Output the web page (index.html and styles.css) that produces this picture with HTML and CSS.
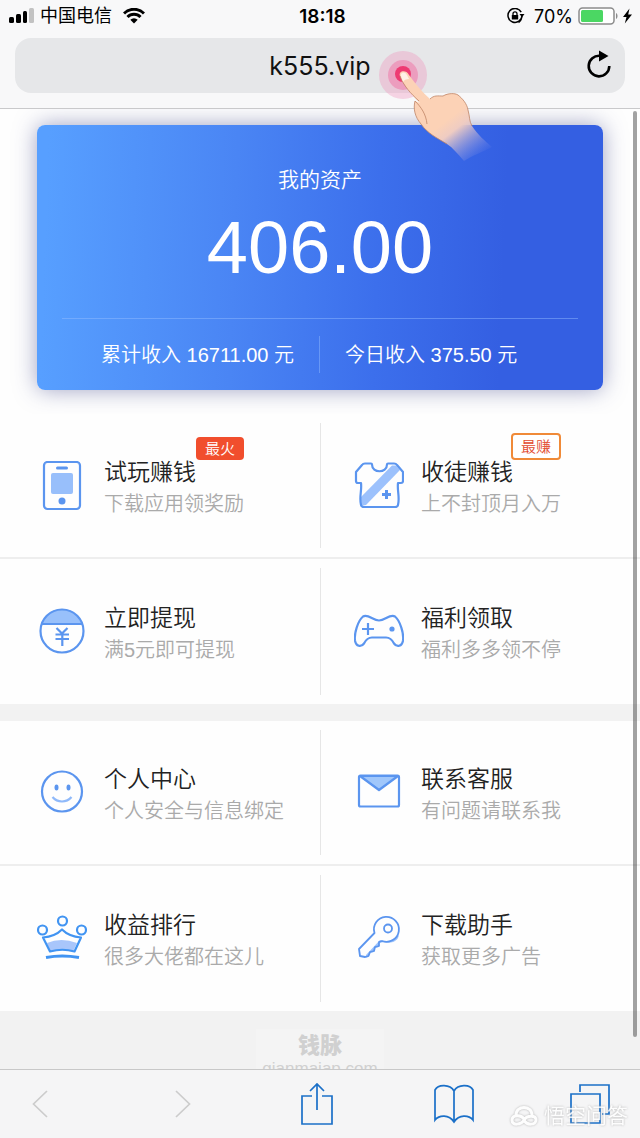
FILE: index.html
```html
<!DOCTYPE html>
<html lang="zh-CN">
<head>
<meta charset="utf-8">
<meta name="viewport" content="width=device-width, initial-scale=1">
<title>k555.vip</title>
<link rel="stylesheet" href="styles.css">
</head>
<body>
<header class="browser-head">
  <div class="status">
    <div class="status-side">
      <svg width="26" height="16" viewBox="0 0 26 16" aria-hidden="true"><rect x="0" y="9" width="5" height="6" rx="1.500"/><rect x="7" y="6" width="5" height="9" rx="1.500"/><rect x="14" y="3" width="4" height="12" rx="1.500"/><rect x="20" y="0" width="5" height="15" rx="1.500" fill="#c2c2c2"/></svg>
      <span class="carrier">中国电信</span>
      <svg class="wifi" width="22" height="16" viewBox="0 0 22 16" fill="none" stroke="#000" stroke-width="3" aria-hidden="true"><path d="M1 5.500a14 14 0 0 1 20 0M4.500 9a9 9 0 0 1 13 0"/><path d="M11 15.500 7.300 11.800a5.200 5.200 0 0 1 7.400 0z" fill="#000" stroke="none"/></svg>
    </div>
    <span class="clock">18:18</span>
    <div class="status-side status-right">
      <svg width="18" height="16" viewBox="0 0 18 16" aria-hidden="true"><path d="M14.200 4.200a7 7 0 1 0 .8 3.300M11.500 14.500a7 7 0 0 0 3-4" fill="none" stroke="#000" stroke-width="1.500"/><path d="M12.500 6h5L15 9.300z"/><rect x="4.800" y="7" width="6.400" height="4.600" rx=".6"/><path d="M6 7.500V5.800a2 2 0 0 1 4 0v1.700" fill="none" stroke="#000" stroke-width="1.300"/></svg>
      <span class="percent">70%</span>
      <svg width="54" height="18" viewBox="0 0 54 18" aria-hidden="true"><rect x="1" y="1" width="35" height="16" rx="3.500" fill="#fff" stroke="#8c8c8c" stroke-width="1.500"/><rect x="3" y="3" width="22" height="12" rx="1.500" fill="#4bd763"/><path d="M38 6c2 .8 2 5.200 0 6z" fill="#8c8c8c"/><path d="M51.500 1.500 45 10h3.500L46.800 16.500 54 7.500h-3.800z"/></svg>
    </div>
  </div>
  <div class="address">
    <input class="address-input" type="text" value="k555.vip" aria-label="网址">
    <button class="reload" type="button" aria-label="刷新">
      <svg width="26" height="30" viewBox="0 0 26 30" aria-hidden="true"><path d="M14 5.800A10.300 10.300 0 1 0 23.300 16" fill="none" stroke="#000" stroke-width="2.600"/><path d="M13 .5 22.500 6 13 11.500z"/></svg>
    </button>
    <svg class="tap-hand" width="120" height="116" viewBox="376 48 120 116" aria-hidden="true">
      <defs>
        <linearGradient id="skin" gradientUnits="userSpaceOnUse" x1="450" y1="118" x2="480" y2="157">
          <stop offset="0" stop-color="#fcd2b6"/><stop offset=".25" stop-color="#efccc2"/><stop offset="1" stop-color="#8c96e8" stop-opacity="0.050"/>
        </linearGradient>
      </defs>
      <circle cx="403" cy="75" r="24" fill="#ef86b4" opacity=".32"/>
      <circle cx="403" cy="75" r="15" fill="#ef5d98" opacity=".4"/>
      <circle cx="403" cy="74" r="8" fill="#ee3a72"/>
      <path d="M400 76C398 71 406 69 409 75 415 83 422 92 430 99 434 95 438 96 443 96 448 93 455 93 458 95 463 99 467 104 468 110 470 117 469 121 472 126 478 135 485 141 492 147 483 152 473 155 464 161 458 154 453 148 447 144 437 138 427 133 421 124 415 117 413 109 415 101L420 103C412 95 404 86 400 76z" fill="url(#skin)"/>
      <path d="M400 76C403 85 411 94 419 101M415 101C413 109 415 117 421 124 427 133 437 138 447 144M415 101C421 107 426 114 427 124M430 99C434 95 438 96 443 96 448 93 455 93 458 95 463 99 467 104 468 110 470 117 469 121 472 126" fill="none" stroke="#bf8466" stroke-width=".8"/>
      <path d="M401 76c-1-4 4-5 6-1l2 4c-3 0-5 1-6 3z" fill="#fff0e7"/>
    </svg>
  </div>
</header>

<div class="viewport">
  <main class="page">
    <section class="asset-wrap">
      <div class="asset">
        <h1 class="asset-title">我的资产</h1>
        <p class="asset-amount">406.00</p>
        <div class="asset-stats">
          <p class="stat stat-total">累计收入 16711.00 元</p>
          <p class="stat">今日收入 375.50 元</p>
        </div>
      </div>
    </section>

    <nav class="tiles" aria-label="赚钱与提现">
      <a class="tile" href="#play">
        <svg class="tile-icon" viewBox="0 0 50 50" aria-hidden="true"><rect x="7" y="1" width="36" height="47" rx="3.500"/><path d="M20.500 7h9" stroke-width="3" stroke-linecap="round"/><rect x="14" y="12" width="22" height="21" rx="2" fill="#98bffb" stroke="none"/><circle cx="25" cy="40" r="3.500" fill="#5b95ef" stroke="none"/></svg>
        <span class="tile-text"><span class="tile-title">试玩赚钱<span class="badge badge-hot">最火</span></span><span class="tile-sub">下载应用领奖励</span></span>
      </a>
      <a class="tile" href="#invite">
        <svg class="tile-icon" viewBox="0 0 50 50" aria-hidden="true"><path d="M38 4.500h4L46 9 12 44l-5 1-1-8z" fill="#9cc1fc" stroke="none"/><path d="M11 2.500h6q1 0 1 1c0 9 15 9 15 0q0-1 1-1h6q2 0 3 1.500l6 7V20q0 2-2 2h-3c-1 8 2 14 0 22q-.5 2-3 2H10q-2.500 0-3-2c-2-8 1-14 0-22H4q-2 0-2-2v-9L8 4q1-1.500 3-1.500z"/><path d="M32.500 29v9M28 33.500h9" stroke-width="3"/></svg>
        <span class="tile-text"><span class="tile-title">收徒赚钱<span class="badge badge-earn">最赚</span></span><span class="tile-sub">上不封顶月入万</span></span>
      </a>
      <a class="tile" href="#withdraw">
        <svg class="tile-icon" viewBox="0 0 50 50" aria-hidden="true"><path d="M4.500 17A21.500 21.500 0 0 1 45.500 17z" fill="#98c0fb" stroke="none"/><circle cx="25" cy="24" r="21.500"/><path d="M5 17h40M19.500 21l5.500 5.500 5.500-5.500M18.500 27.500h13.500M18.500 32h13.500M25.300 26.500V39"/></svg>
        <span class="tile-text"><span class="tile-title">立即提现</span><span class="tile-sub">满5元即可提现</span></span>
      </a>
      <a class="tile" href="#welfare">
        <svg class="tile-icon" viewBox="0 0 50 50" aria-hidden="true"><path d="M9 9.500c5-3 10 4 16 4s11-7 16-4c5 4 9 17 8 24-1 6-6 7-9 3-2-4-4-6-8-6H18c-4 0-6 2-8 6-3 4-8 3-9-3-1-7 3-20 8-24z"/><path d="M14 16v12M8 22h12"/><circle cx="38" cy="22" r="2.600" fill="#5c96ef" stroke="none"/></svg>
        <span class="tile-text"><span class="tile-title">福利领取</span><span class="tile-sub">福利多多领不停</span></span>
      </a>
    </nav>

    <nav class="tiles tiles-next" aria-label="账户与服务">
      <a class="tile" href="#profile">
        <svg class="tile-icon" viewBox="0 0 50 50" aria-hidden="true"><circle cx="25" cy="23.500" r="20"/><ellipse cx="19.500" cy="19.500" rx="2" ry="3" fill="#5c96ef" stroke="none"/><ellipse cx="31.500" cy="19.500" rx="2" ry="3" fill="#5c96ef" stroke="none"/><path d="M15.500 29c5 6 14 6 19 0" stroke="#8fb9fa"/></svg>
        <span class="tile-text"><span class="tile-title">个人中心</span><span class="tile-sub">个人安全与信息绑定</span></span>
      </a>
      <a class="tile" href="#service">
        <svg class="tile-icon" viewBox="0 0 50 50" aria-hidden="true"><path d="m6 8 19 14L44 8z" fill="#a0c7fb"/><rect x="5" y="7.500" width="40" height="31" rx="1.500"/></svg>
        <span class="tile-text"><span class="tile-title">联系客服</span><span class="tile-sub">有问题请联系我</span></span>
      </a>
      <a class="tile" href="#ranking">
        <svg class="tile-icon crown" viewBox="0 2 50 50" aria-hidden="true"><path d="M10 31q14-6 30 0l-4 8.500q-12-3-23 0z" fill="#a9c6fb" stroke="none"/><path d="M6 25.500q12-1 19-8 7 7 19 8l-6.500 14q-12-3.500-24.500 0z"/><circle cx="25.500" cy="9" r="4.500"/><circle cx="5.500" cy="18" r="4.500"/><circle cx="44.500" cy="18" r="4.500"/><path d="M9 45.500q16-3 33 0" stroke-width="3"/></svg>
        <span class="tile-text"><span class="tile-title">收益排行</span><span class="tile-sub">很多大佬都在这儿</span></span>
      </a>
      <a class="tile" href="#helper">
        <svg class="tile-icon" viewBox="0 2 50 50" aria-hidden="true"><path d="M12 43 26 28q9 4 19-5c-1 7-9 9-15 7l-5 1v4l-4 1-1 4-4 1-1.500 4-3.500 1z" fill="#9cc3fc" stroke="none"/><path d="M20.500 21A12.500 12.500 0 1 1 28 29l-3 1v4l-4 1-1 4-4 1-1.500 4-3.500 1-5-1-1-7z" stroke-width="1.800"/><circle cx="34" cy="16.500" r="4" stroke-width="1.800"/></svg>
        <span class="tile-text"><span class="tile-title">下载助手</span><span class="tile-sub">获取更多广告</span></span>
      </a>
    </nav>

    <footer class="brand">
      <div class="brand-box"><strong class="brand-name">钱脉</strong><span class="brand-url">qianmaiap.com</span></div>
    </footer>
  </main>
  <div class="scroll-thumb"></div>
</div>

<div class="toolbar">
  <button class="tool tool-off tool-back" type="button" aria-label="后退"><svg width="16" height="28" viewBox="0 0 16 28"><path d="M15 1 1.500 14 15 27"/></svg></button>
  <button class="tool tool-off" type="button" aria-label="前进"><svg width="16" height="28" viewBox="0 0 16 28"><path d="m1 1 13.500 13L1 27"/></svg></button>
  <button class="tool" type="button" aria-label="分享"><svg width="32" height="44" viewBox="0 0 32 44"><path d="M11 14H1v28h30V14H21M16 28V2M9 9l7-7 7 7"/></svg></button>
  <button class="tool" type="button" aria-label="书签"><svg width="40" height="40" viewBox="0 0 40 40"><path d="M20 38V7c-4-7-16-7-19-1v30c4-5 14-6 19 2 5-8 15-7 19-2V6c-3-6-15-6-19 1"/></svg></button>
  <button class="tool" type="button" aria-label="标签页"><svg width="40" height="40" viewBox="0 0 40 40"><path d="M1 10h29v29H1zM10 8V1h29v29h-7"/></svg></button>
  <div class="watermark">
    <svg width="28" height="20" viewBox="0 0 28 20" fill="none" stroke="#fff" stroke-width="3" aria-hidden="true"><path d="M6 9C6-1 22-1 22 9M14 13c-3-5-12-4-12 1 0 6 9 5 12 0 3-5 12-5 12 0s-9 6-12 0z"/></svg>
    <span>悟空问答</span>
  </div>
</div>
</body>
</html>
```
FILE: styles.css
```css
* {
  box-sizing: border-box;
}

body {
  margin: 0;
  height: 100vh;
  display: flex;
  flex-direction: column;
  background: #f2f2f2;
  color: #222;
  font-family: "Liberation Sans", "Noto Sans CJK SC", sans-serif;
}

h1, p {
  margin: 0;
}

button {
  padding: 0;
  border: 0;
  background: none;
}

svg {
  display: block;
  flex: none;
}

/* Browser header */
.browser-head {
  position: relative;
  z-index: 2;
  padding-bottom: 15px;
  background: #f8f8f9;
  border-bottom: 1px solid #c9c9cb;
}

.status {
  display: grid;
  grid-template-columns: 1fr auto 1fr;
  align-items: center;
  height: 32px;
  margin-bottom: 6px;
  padding: 0 8px 0 9px;
  color: #000;
  font-family: Inter, "Noto Sans CJK SC", sans-serif;
}

.status-side {
  display: flex;
  align-items: center;
  gap: 5px;
}

.status-right {
  justify-content: flex-end;
}

.carrier {
  font-size: 18px;
  line-height: 24px;
}

.wifi {
  margin-left: 6px;
}

.clock {
  padding-left: 4px;
  font-size: 19px;
  font-weight: 600;
}

.percent {
  margin-left: 4px;
  font-size: 18px;
}

.address {
  position: relative;
  display: flex;
  align-items: center;
  height: 55px;
  margin: 0 15px;
  border-radius: 16px;
  background: #e6e7e9;
}

.address-input {
  flex: 1;
  min-width: 0;
  height: 55px;
  padding: 0 48px;
  border: 0;
  outline: 0;
  background: none;
  color: #111;
  font: 25px Inter, sans-serif;
  text-align: center;
}

.reload {
  position: absolute;
  right: 13px;
  top: 12px;
}

.tap-hand {
  position: absolute;
  left: calc(50% + 56px);
  top: 10px;
  pointer-events: none;
}

/* Page area */
.viewport {
  position: relative;
  flex: 1;
  min-height: 0;
}

.page {
  height: 100%;
  overflow: hidden auto;
  scrollbar-width: none;
}

.scroll-thumb {
  position: absolute;
  top: 2px;
  right: 3px;
  bottom: 32px;
  width: 4px;
  border-radius: 2px;
  background: rgba(0, 0, 0, 0.36);
}

.asset-wrap {
  padding: 16px 37px 24px;
  background: #fefefe;
}

.asset {
  padding: 38px 25px 0;
  border-radius: 8px;
  background: linear-gradient(92deg, #579fff 2%, #4a85f4 35%, #3c6fec 60%, #345fe2 82%);
  box-shadow: 0 0 22px rgba(66, 72, 140, 0.5);
  color: #fff;
  text-align: center;
}

.asset-title {
  font-size: 21px;
  font-weight: 350;
  line-height: 33px;
}

.asset-amount {
  padding: 10px 0 28px;
  font-size: 74px;
  line-height: 84px;
}

.asset-stats {
  display: grid;
  grid-template-columns: 1fr 1fr;
  padding: 17px 0;
  border-top: 1px solid rgba(150, 190, 255, 0.45);
  font-size: 20px;
  font-weight: 350;
}

.stat {
  padding: 2px 25px 0;
  line-height: 35px;
  text-align: left;
}

.stat-total {
  border-right: 1px solid rgba(150, 190, 255, 0.45);
  text-align: right;
}

/* Menu tiles */
.tiles {
  display: grid;
  grid-template-columns: 1fr 1fr;
  grid-auto-rows: 145px;
  background: #fefefe;
}

.tiles-next {
  margin-top: 17px;
}

.tile {
  position: relative;
  display: flex;
  align-items: center;
  gap: 17px;
  padding-left: 37px;
  color: #222;
  text-decoration: none;
}

.tile:nth-child(-n+2) {
  border-bottom: 2px solid #eee;
}

.tile:nth-child(even) {
  padding-left: 34px;
}

.tile:nth-child(even)::before {
  content: "";
  position: absolute;
  left: 0;
  top: 9px;
  bottom: 9px;
  width: 1px;
  background: #e6e6e6;
}

.tile-icon {
  width: 50px;
  height: 50px;
  fill: none;
  stroke: #5b95ef;
  stroke-width: 2.2;
  stroke-linejoin: round;
}

.crown {
  stroke: #4194f2;
}

.tile-text {
  display: flex;
  flex-direction: column;
  align-items: flex-start;
  padding-top: 5px;
}

.tile-title {
  position: relative;
  font-size: 23px;
  font-weight: 350;
  line-height: 32px;
}

.tile-sub {
  color: #aaa;
  font-size: 20px;
  font-weight: 350;
  line-height: 32px;
}

.badge {
  position: absolute;
  bottom: 28px;
  border-radius: 4px;
  white-space: nowrap;
  font-size: 15px;
  line-height: 23px;
}

.badge-hot {
  left: 100%;
  padding: 0 9px;
  background: #f14e2d;
  color: #fff;
}

.badge-earn {
  left: 90px;
  padding: 0 8px;
  border: 2px solid #f08a38;
  background: #fff;
  color: #e2492e;
}

/* Site footer */
.brand {
  display: flex;
  justify-content: center;
  padding-top: 18px;
  background: #f2f2f2;
}

.brand-box {
  display: flex;
  flex-direction: column;
  align-items: center;
  padding: 2px 6px 0;
  background: #f4f4f4;
  color: #d0d0d0;
}

.brand-name {
  font-size: 22px;
  font-weight: 900;
  line-height: 29px;
}

.brand-url {
  font-size: 17px;
  line-height: 17px;
}

/* Browser toolbar */
.toolbar {
  position: relative;
  display: flex;
  justify-content: space-between;
  align-items: center;
  height: 69px;
  padding: 0 30px 0 32px;
  border-top: 1px solid #c8c8c8;
  background: #f5f5f6;
}

.tool {
  display: flex;
  justify-content: center;
  width: 40px;
  color: #1b70c8;
}

.tool svg {
  fill: none;
  stroke: currentColor;
  stroke-width: 1.7;
}

.tool-off {
  width: 36px;
  color: #ccc;
}

.tool-back {
  justify-content: flex-start;
}

.watermark {
  position: absolute;
  right: 12px;
  bottom: 8px;
  display: flex;
  align-items: center;
  gap: 6px;
  color: #fff;
  font-size: 21px;
  line-height: 28px;
  opacity: 0.85;
  filter: drop-shadow(0 0 1px #aaa);
  pointer-events: none;
}
```
